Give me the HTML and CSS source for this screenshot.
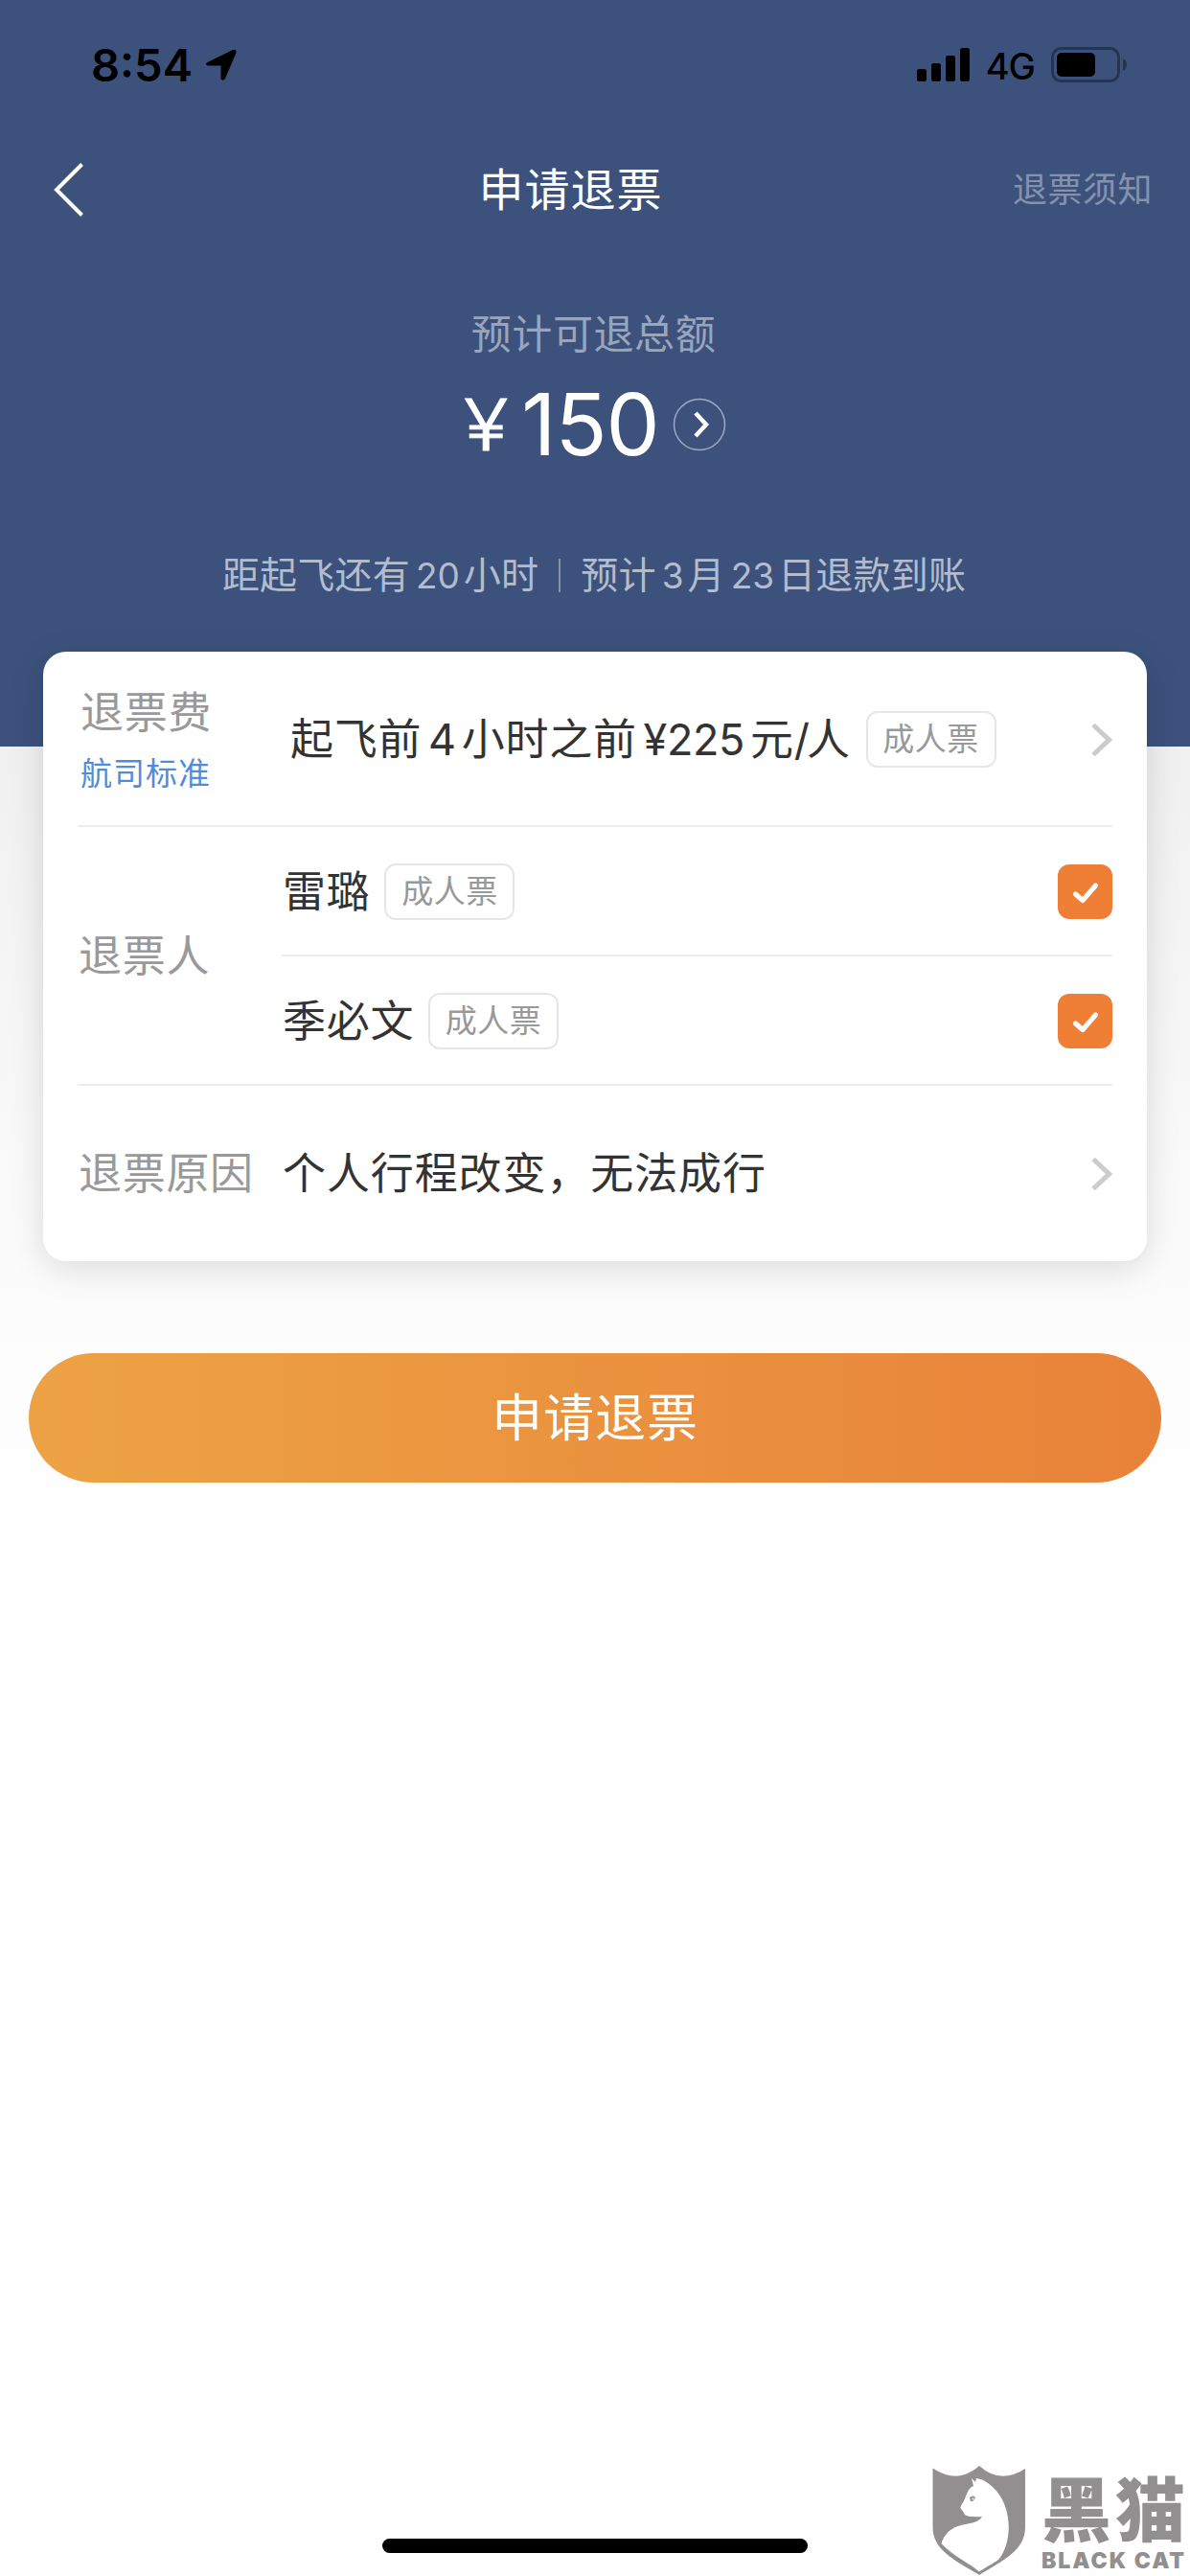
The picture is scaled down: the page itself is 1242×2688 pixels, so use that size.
FILE: index.html
```html
<!DOCTYPE html>
<html lang="zh-CN">
<head>
<meta charset="utf-8">
<title>申请退票</title>
<link rel="stylesheet" href="styles.css">
</head>
<body>
<div class="page">
  <header class="hero">
    <div class="status">
      <div class="status-left">
        <span class="time">8:54</span>
        <svg class="locate" width="34" height="34" viewBox="0 0 34 34"><path d="M2.500 14L28.500 1.300Q33 -.300 32.500 4L21 31Q18.500 34.500 16.500 31V17.500H3Q-1 16.500 2.500 14Z"/></svg>
      </div>
      <div class="status-right">
        <svg width="56" height="36" viewBox="0 0 56 36"><rect x="0" y="22" width="10" height="13" rx="2.500"/><rect x="15" y="16" width="10" height="19" rx="2.500"/><rect x="30" y="8" width="10" height="27" rx="2.500"/><rect x="45" y="0" width="10" height="35" rx="2.500"/></svg>
        <span class="network">4G</span>
        <svg width="80" height="38" viewBox="0 0 80 38"><rect x="1.500" y="1.500" width="69" height="34" rx="9" fill="none" stroke="#253450" stroke-width="3"/><rect x="6" y="6" width="40" height="25" rx="5"/><path d="M75 12Q79 14 79 18.500T75 25Z" fill="#253450"/></svg>
      </div>
    </div>
    <nav class="nav">
      <svg class="back" width="32" height="56" viewBox="0 0 32 56"><path d="M29.500 1.500L3 28L29.500 54.500" fill="none" stroke="#fff" stroke-width="4"/></svg>
      <h1 class="title">申请退票</h1>
      <a class="notice">退票须知</a>
    </nav>
    <p class="caption">预计可退总额</p>
    <div class="amount">
      <span class="yen">¥</span><span class="sum">150</span>
      <svg class="detail" width="56" height="56" viewBox="0 0 56 56" fill="none"><circle cx="28" cy="28" r="26.500" stroke="#9da9be" stroke-width="1.500"/><path d="M24 16L35 28L24 40" stroke="#fff" stroke-width="4.500"/></svg>
    </div>
    <p class="summary"><span>距起飞还有<b>20</b>小时</span><i></i><span>预计<b>3</b>月<b>23</b>日退款到账</span></p>
  </header>

  <main class="body">
    <section class="card">
      <div class="row fee">
        <div class="label">退票费<a class="standard">航司标准</a></div>
        <div class="value">起飞前<b>4</b>小时之前<b>¥225</b>元<span class="slash">/</span>人</div>
        <span class="tag">成人票</span>
        <svg class="chevron" width="22" height="34" viewBox="0 0 22 34"><path d="M2 1.500L18.500 17L2 32.500"/></svg>
      </div>
      <div class="row people">
        <div class="label">退票人</div>
        <div class="list">
          <div class="person"><span class="name">雷璐</span><span class="tag">成人票</span><span class="check"><svg width="57" height="57" viewBox="0 0 57 57"><path d="M18.500 31L26 37.500L39.500 22"/></svg></span></div>
          <div class="person"><span class="name">季必文</span><span class="tag">成人票</span><span class="check"><svg width="57" height="57" viewBox="0 0 57 57"><path d="M18.500 31L26 37.500L39.500 22"/></svg></span></div>
        </div>
      </div>
      <div class="row reason">
        <div class="label">退票原因</div>
        <div class="value">个人行程改变，无法成行</div>
        <svg class="chevron" width="22" height="34" viewBox="0 0 22 34"><path d="M2 1.500L18.500 17L2 32.500"/></svg>
      </div>
    </section>
    <button class="submit">申请退票</button>
  </main>

  <div class="home"></div>
  <div class="mark">
    <svg width="98" height="115" viewBox="0 0 98 115">
      <path fill="#918f90" d="M.500 2.500Q27 20 49 0Q71 20 97 3V64C97 88 75 98 49 114C23 98 .500 88 .500 64Z"/>
      <path fill="#fff" d="M9.500 81C21 94 38 101 49 110.500C57 105 66 101 70 97C86 76 84 30 52 14.500L46 13L45 17L41 13L43 21C35 25 37 31 31 40Q28 44 31 46L34 51Q38 54 52 53C44 66 19 54 9.500 81Z"/>
      <path fill="#918f90" d="M39 33Q43 30 45 33Q43 38 40 37Z"/><circle cx="42.500" cy="34.500" r="1" fill="#fff"/>
    </svg>
    <div class="mark-text"><span class="mark-cn">黑猫</span><span class="mark-en">BLACK CAT</span></div>
  </div>
</div>
</body>
</html>
```

FILE: styles.css
```css
* { box-sizing: border-box; margin: 0; padding: 0; }
body { background: #fff; font-family: Inter, "Noto Sans CJK SC", sans-serif; color: #333; }
b { font-weight: 400; }
svg { display: block; flex: none; }

.page { position: relative; height: 2688px; overflow: hidden; }

.hero { height: 779px; background: #3c527c; color: #fff; }
.status { display: flex; justify-content: space-between; height: 136px; padding: 0 65px 0 95px; color: #000; }
.status-left, .status-right { display: flex; align-items: center; }
.time { font-size: 47px; font-weight: 600; line-height: 136px; letter-spacing: 0; }
.locate { margin-left: 13px; }
.network { margin: 2px 17px 0 16px; font-size: 38px; font-weight: 500; letter-spacing: -1px; }

.nav { display: grid; grid-template-columns: 1fr auto 1fr; align-items: center; height: 124px; padding: 0 39px 0 56px; }
.title { margin-right: 68px; font-size: 47px; font-weight: 400; letter-spacing: 1px; }
.notice { justify-self: end; font-size: 36px; letter-spacing: .5px; color: #8492ac; }
.title, .notice { line-height: 60px; }

.caption { margin-top: 59px; padding-right: 3px; text-align: center; font-size: 42px; line-height: 60px; letter-spacing: .6px; color: #99a5bb; }
.amount { display: flex; align-items: center; justify-content: center; height: 104px; margin-top: 12px; }
.yen { width: 60px; font-size: 74px; font-weight: 300; line-height: 104px; transform: scaleX(1.16); transform-origin: left; -webkit-text-stroke: .8px; }
.sum { font-size: 89px; line-height: 104px; letter-spacing: -1px; }
.detail { margin-left: 14px; }
.summary { display: flex; align-items: center; justify-content: center; margin-top: 75px; padding-right: 2px; font-size: 39px; line-height: 60px; letter-spacing: .2px; color: #b2bccd; }
.summary i { width: 2px; height: 35px; margin: 0 21px; background: #8492ac; }
.summary b { margin: 0 4px 0 6px; font-size: 37px; letter-spacing: 0; }

.body { display: flex; flex-direction: column; align-items: center; height: 841px; background: linear-gradient(#f0f0f0, #fafafa 55%, #fff); }
.card { width: 1152px; height: 636px; margin-top: -99px; padding: 0 36px; border-radius: 24px; background: #fff; box-shadow: 0 8px 36px rgba(0, 0, 0, .13); }
.row { display: flex; align-items: center; border-bottom: 2px solid #ededed; font-size: 45px; line-height: 60px; letter-spacing: .7px; }
.fee { height: 183px; padding-top: 2px; }
.people { height: 270px; }
.reason { height: 183px; border: 0; }
.label { width: 213px; padding-left: 1px; color: #999; }
.fee .label { width: 222px; padding: 8px 0 0 3px; }
.people .label { padding-top: 2px; }
.standard { display: block; margin-top: 3px; font-size: 33px; letter-spacing: 1px; color: #508cdd; }
.value b { margin: 0 6px 0 7px; letter-spacing: -.4px; }
.slash { margin-right: -3px; letter-spacing: 0; }
.reason .value { padding-left: 1px; letter-spacing: .9px; }
.tag { width: 136px; height: 59px; margin-left: 16px; border: 2px solid #e6e6e6; border-radius: 12px; font-size: 33px; line-height: 54px; letter-spacing: .5px; text-align: center; color: #999; }
.chevron { margin-left: auto; fill: none; stroke: #ccc; stroke-width: 5; }
.list { flex: 1; }
.person { display: flex; align-items: center; height: 133px; padding: 2px 0 0 1px; }
.person .tag { margin-left: 15px; }
.person + .person { height: 135px; border-top: 2px solid #ededed; }
.check { width: 57px; height: 57px; margin-left: auto; border-radius: 12px; background: #ef7f35; }
.check svg { fill: none; stroke: #fff; stroke-width: 5; stroke-linecap: round; stroke-linejoin: round; }
.submit { width: 1182px; height: 135px; margin-top: 96px; padding-top: 2px; border: 0; border-radius: 68px; background: linear-gradient(90deg, #eda345, #e88239); color: #fff; font: 400 53px/133px Inter, "Noto Sans CJK SC", sans-serif; letter-spacing: 1px; }

.home { position: absolute; left: 399px; bottom: 24px; width: 444px; height: 15px; border-radius: 8px; background: #000; }
.mark { position: absolute; right: 0; bottom: 0; display: flex; width: 269px; height: 115px; color: #918f90; }
.mark-text { display: flex; flex-direction: column; margin-left: 16px; }
.mark-cn { height: 86px; font: 900 73px/82px "Noto Sans CJK SC", sans-serif; letter-spacing: 4px; white-space: nowrap; }
.mark-en { font-size: 23px; font-weight: 900; line-height: 26px; letter-spacing: 2px; white-space: nowrap; }
```
